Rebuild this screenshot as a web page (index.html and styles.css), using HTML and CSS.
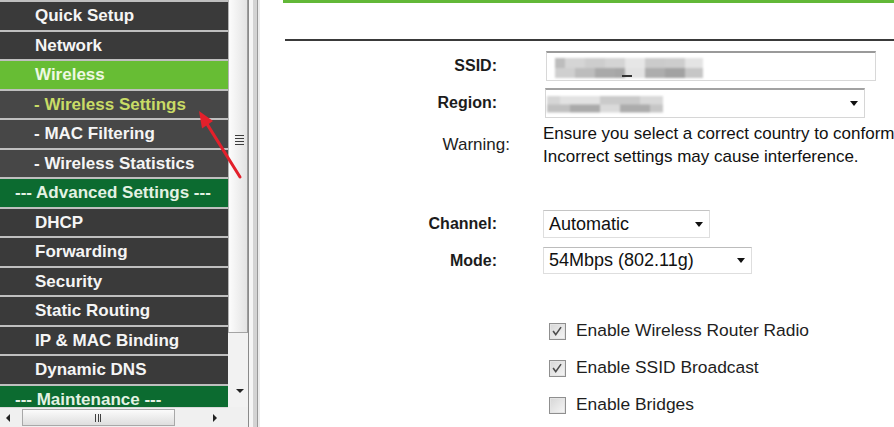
FILE: index.html
```html
<!DOCTYPE html>
<html lang="en">
<head>
<meta charset="utf-8">
<title>Wireless Settings</title>
<link rel="stylesheet" href="styles.css">
</head>
<body>
<div class="page">
  <div class="sideframe">
    <div class="sidetop">
      <ul class="menu">
        <li class="item">Quick Setup</li>
        <li class="item">Network</li>
        <li class="item active">Wireless</li>
        <li class="item sub current">- Wireless Settings</li>
        <li class="item sub">- MAC Filtering</li>
        <li class="item sub">- Wireless Statistics</li>
        <li class="item section">--- Advanced Settings ---</li>
        <li class="item">DHCP</li>
        <li class="item">Forwarding</li>
        <li class="item">Security</li>
        <li class="item">Static Routing</li>
        <li class="item">IP &amp; MAC Binding</li>
        <li class="item">Dynamic DNS</li>
        <li class="item section">--- Maintenance ---</li>
      </ul>
      <div class="vscroll">
        <div class="vthumb"><span class="grip-h"></span></div>
        <div class="vtrack"><span class="arrow-down"></span></div>
      </div>
    </div>
    <div class="sidebottom">
      <div class="hscroll">
        <span class="arrow-left"></span>
        <div class="hthumb"><span class="grip-v"></span></div>
        <span class="arrow-right"></span>
      </div>
      <div class="corner"></div>
    </div>
  </div>
  <div class="divider"></div>
  <main class="content">
    <div class="greenbar"></div>
    <div class="rule"></div>
    <div class="form">
      <div class="row row-ssid">
        <div class="label">SSID:</div>
        <div class="textbox"><span class="blur-ssid"></span><span class="underscore"></span></div>
      </div>
      <div class="row row-region">
        <div class="label">Region:</div>
        <div class="select select-region"><span class="blur-region"></span><span class="arrow"></span></div>
      </div>
      <div class="row row-warning">
        <div class="label warn-label">Warning:</div>
        <div class="warn-text">Ensure you select a correct country to conform<br>Incorrect settings may cause interference.</div>
      </div>
      <div class="row row-channel">
        <div class="label">Channel:</div>
        <div class="select select-channel"><span class="sel-text">Automatic</span><span class="arrow"></span></div>
      </div>
      <div class="row row-mode">
        <div class="label">Mode:</div>
        <div class="select select-mode"><span class="sel-text">54Mbps (802.11g)</span><span class="arrow"></span></div>
      </div>
      <div class="checks">
        <div class="check">
          <span class="box"><svg viewBox="0 0 17 17" width="15" height="15"><path d="M3.5 8 L6.5 12 L12.5 3.5" fill="none" stroke="#4d4d4d" stroke-width="1.8"/></svg></span>
          <span>Enable Wireless Router Radio</span>
        </div>
        <div class="check">
          <span class="box"><svg viewBox="0 0 17 17" width="15" height="15"><path d="M3.5 8 L6.5 12 L12.5 3.5" fill="none" stroke="#4d4d4d" stroke-width="1.8"/></svg></span>
          <span>Enable SSID Broadcast</span>
        </div>
        <div class="check">
          <span class="box"></span>
          <span>Enable Bridges</span>
        </div>
      </div>
    </div>
  </main>
  <svg class="pointer" viewBox="0 0 60 85" width="60" height="85">
    <line x1="50" y1="77" x2="17.4" y2="24.6" stroke="#e3202b" stroke-width="3" stroke-linecap="round"/>
    <polygon points="9,11 23,21 12,28.5" fill="#e3202b"/>
  </svg>
</div>
</body>
</html>
```
FILE: styles.css
```css
* { box-sizing: border-box; }

body {
  margin: 0;
  width: 894px;
  height: 427px;
  overflow: hidden;
  background: #fff;
  font-family: "Liberation Sans", Arial, sans-serif;
}

.page {
  position: relative;
  display: flex;
  height: 427px;
}

/* ---------- left frame ---------- */
.sideframe {
  flex: none;
  width: 248px;
  display: flex;
  flex-direction: column;
}

.sidetop {
  display: flex;
  height: 407px;
}

.menu {
  list-style: none;
  margin: 0;
  padding: 0;
  width: 228px;
  flex: none;
  background: #bfbfbf;
  overflow: hidden;
}

.item {
  margin-top: 2px;
  height: 27.5px;
  line-height: 28px;
  padding-left: 35px;
  background: #3a3a3a;
  color: #f5f5f5;
  font-weight: bold;
  font-size: 17px;
  white-space: nowrap;
}

.item.sub {
  background: #474747;
  padding-left: 34px;
}

.item.active {
  background: #67bd34;
  color: #eef8e2;
}

.item.sub.current {
  color: #c9dc66;
}

.item.section {
  background: #0c6b30;
  color: #e3f2e3;
  padding-left: 15px;
}

.vscroll {
  width: 20px;
  flex: none;
  display: flex;
  flex-direction: column;
  background: #f2f2f2;
}

.vthumb {
  height: 333px;
  border-left: 1px solid #b4b4b4;
  border-right: 1px solid #9c9c9c;
  border-bottom: 1px solid #a4a4a4;
  background: linear-gradient(to right, #fcfcfc, #e3e3e3);
  padding-top: 135px;
  padding-left: 6px;
}

.grip-h {
  display: block;
  width: 9px;
  height: 11px;
  background: repeating-linear-gradient(to bottom, #3c3c3c 0 1.5px, transparent 1.5px 3px);
}

.vtrack {
  flex: 1;
  display: flex;
  flex-direction: column;
  justify-content: flex-end;
  align-items: center;
  padding-bottom: 14px;
  padding-left: 3px;
}

.arrow-down {
  width: 0;
  height: 0;
  border-left: 4px solid transparent;
  border-right: 4px solid transparent;
  border-top: 4px solid #222;
}

.sidebottom {
  display: flex;
  height: 20px;
}

.hscroll {
  width: 228px;
  flex: none;
  display: flex;
  align-items: center;
  background: #f0f0f0;
  border-top: 1px solid #dadada;
}

.arrow-left {
  margin-left: 6px;
  width: 0;
  height: 0;
  border-top: 4px solid transparent;
  border-bottom: 4px solid transparent;
  border-right: 4px solid #222;
}

.hthumb {
  margin-left: 12px;
  width: 153px;
  height: 17px;
  border: 1px solid #a8a8a8;
  background: linear-gradient(to bottom, #fbfbfb, #dedede);
  display: flex;
  justify-content: center;
  align-items: center;
}

.grip-v {
  width: 8px;
  height: 8px;
  background: repeating-linear-gradient(to right, #404040 0 1.2px, transparent 1.2px 2.6px);
}

.arrow-right {
  margin-left: auto;
  margin-right: 11px;
  width: 0;
  height: 0;
  border-top: 4px solid transparent;
  border-bottom: 4px solid transparent;
  border-left: 4px solid #222;
}

.corner {
  flex: 1;
  background: #f0f0f0;
}

.divider {
  flex: none;
  width: 12px;
  background: linear-gradient(to right,
    #8a8a8a 0 1px,
    #f5f5f5 1px 5px,
    #d3d3d3 5px 9px,
    #999 9px 10px,
    #ececec 10px 12px);
}

/* ---------- content ---------- */
.content {
  flex: 1;
  min-width: 0;
  overflow: hidden;
  background: #fff;
  color: #151515;
}

.greenbar {
  height: 3px;
  margin-left: 23px;
  background: #62b838;
}

.rule {
  margin: 36px 0 0 25px;
  height: 2px;
  background: #3a3a3a;
}

.form {
  margin-top: 10px;
}

.row {
  display: flex;
  align-items: center;
}

.label {
  flex: none;
  width: 237px;
  text-align: right;
  font-weight: bold;
  font-size: 16px;
  color: #1c1c1c;
  margin-right: 46px;
}

.row-ssid { height: 30px; }

.textbox {
  position: relative;
  width: 330px;
  height: 30px;
  margin-left: 3px;
  border: 1px solid #d8d8d8;
  border-top: 2px solid #9a9a9a;
  background: #fff;
  padding-left: 8px;
  display: flex;
  align-items: center;
}

.blur-ssid {
  display: block;
  width: 148px;
  height: 20px;
  margin-top: 2px;
  filter: blur(1px);
  background:
    linear-gradient(to right,
      #bdbdbd 0 10px, #d5d5d5 10px 30px, #cdcdcd 30px 50px, #d4d4d4 50px 70px,
      #e6e6e6 70px 90px, #cbcbcb 90px 110px, #cdcdcd 110px 130px, #e4e4e4 130px 148px) top / 100% 50% no-repeat,
    linear-gradient(to right,
      #cfcfcf 0 20px, #bdbdbd 20px 40px, #a9a9a9 40px 60px, #a6a6a6 60px 70px,
      #e2e2e2 70px 90px, #adadad 90px 110px, #a2a2a2 110px 130px, #c6c6c6 130px 148px) bottom / 100% 50% no-repeat;
}

.underscore {
  position: absolute;
  left: 75px;
  top: 22px;
  width: 10px;
  height: 2px;
  background: #333;
}

.select {
  display: flex;
  align-items: center;
  background: #fff;
  border: 1px solid #d6d6d6;
  border-top: 2px solid #a2a2a2;
  padding-left: 5px;
  font-size: 18px;
  color: #111;
}

.select .arrow {
  margin-left: auto;
  margin-right: 6px;
  width: 0;
  height: 0;
  border-left: 4.5px solid transparent;
  border-right: 4.5px solid transparent;
  border-top: 5px solid #111;
}

.row-region {
  margin-top: 7px;
  height: 30px;
}

.select-region {
  width: 320px;
  height: 30px;
  margin-left: 2px;
  padding-left: 1px;
}

.blur-region {
  display: block;
  width: 116px;
  height: 17px;
  margin-top: 1px;
  filter: blur(1px);
  background:
    linear-gradient(to right,
      #d6d6d6 0 13px, #e2e2e2 13px 53px, #cacaca 53px 93px, #d9d9d9 93px 116px) top / 100% 50% no-repeat,
    linear-gradient(to right,
      #c0c0c0 0 23px, #aaaaaa 23px 53px, #dadada 53px 73px, #acacac 73px 103px, #c6c6c6 103px 116px) bottom / 100% 50% no-repeat;
}

.row-warning {
  margin-top: 4px;
}

.warn-label {
  width: 250px;
  margin-right: 33px;
  font-weight: normal;
  font-size: 17px;
  color: #222;
}

.warn-text {
  font-size: 17px;
  line-height: 23px;
  color: #111;
  white-space: nowrap;
}

.row-channel {
  margin-top: 42px;
  height: 28px;
}

.select-channel {
  width: 167px;
  height: 28px;
  border: 1px solid #dedede;
  border-top: 1px solid #c4c4c4;
}

.row-mode {
  margin-top: 9px;
  height: 27px;
}

.select-mode {
  width: 209px;
  height: 27px;
  border: 1px solid #dedede;
  border-top: 1px solid #bcbcbc;
}

.checks {
  margin-top: 37.5px;
  margin-left: 289px;
}

.check {
  height: 37px;
  display: flex;
  align-items: center;
  gap: 10px;
  font-size: 17.4px;
  color: #1e1e1e;
}

.box {
  flex: none;
  width: 17px;
  height: 17px;
  margin-top: 2px;
  border: 1px solid #8f8f8f;
  background: linear-gradient(135deg, #d6d6d6, #f6f6f6);
  box-shadow: inset 0 0 0 1px #e4e4e4;
  display: flex;
  align-items: center;
  justify-content: center;
}

.pointer {
  position: absolute;
  left: 190px;
  top: 100px;
  pointer-events: none;
}
```
